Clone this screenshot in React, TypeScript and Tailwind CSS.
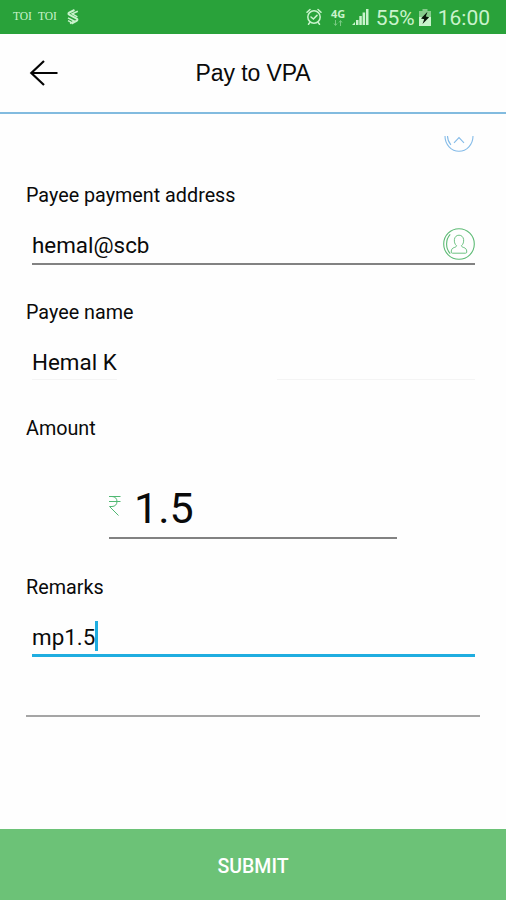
import type { ReactNode } from 'react'

export default function App() {
  return (
    <div className="flex h-[900px] w-[506px] flex-col overflow-hidden bg-[#fefefe] font-['Roboto',sans-serif] text-[#0a0a0a]">
      <StatusBar />
      <header className="grid h-20 shrink-0 grid-cols-[1fr_auto_1fr] items-center border-b-2 border-[#82bbdf] bg-[#fefefe]">
        <button aria-label="Back" className="ml-[29px] w-8">
          <BackArrow />
        </button>
        <h1 className="font-['Liberation_Sans',sans-serif] text-[23px] leading-[30px] tracking-[-0.1px]">
          Pay to VPA
        </h1>
      </header>

      <main className="mt-[22px] flex flex-1 flex-col pl-[26px]">
        <div className="h-4 pl-[417px]">
          <CloseIcon />
        </div>

        <Label className="mt-[32px]">Payee payment address</Label>
        <div className="ml-[6px] mt-[16px] flex h-[41px] w-[443px] items-center justify-between border-b-2 border-[#828282]">
          <Value className="mt-0.5">hemal@scb</Value>
          <ContactIcon />
        </div>

        <Label className="mt-[36px]">Payee name</Label>
        <div className="ml-[6px] mt-[16px] flex h-[39px] w-[443px] items-center justify-between">
          <div className="flex h-full w-[85px] items-center border-b border-[#f4f4f4]">
            <Value className="mt-1">Hemal K</Value>
          </div>
          <div className="h-full w-[198px] border-b border-[#f4f4f4]" />
        </div>

        <Label className="mt-[37px]">Amount</Label>
        <div className="ml-[83px] mt-[38px] flex h-[60px] w-[288px] items-center border-b-2 border-[#828282]">
          <RupeeIcon />
          <span className="ml-[13px] text-[43px] leading-[50px]">1.5</span>
        </div>

        <Label className="mt-[37px]">Remarks</Label>
        <div className="ml-[6px] mt-[15px] flex h-[42px] w-[443px] items-center border-b-[3px] border-[#1fade0]">
          <Value className="mt-1">mp1.5</Value>
          <span className="mt-[3px] h-[30px] w-[3px] bg-[#1fade0]" />
        </div>
        <div className="mt-[58px] h-[2px] w-[454px] bg-[#a5a5a5]" />
      </main>

      <button className="h-[71px] shrink-0 bg-[#6cc277] pt-[4px] text-[19.5px] font-medium text-white">
        SUBMIT
      </button>
    </div>
  )
}

function Label({ className, children }: { className: string; children: ReactNode }) {
  return (
    <div className={className}>
      <div className="h-6 text-[19.75px] leading-6">{children}</div>
    </div>
  )
}

function Value({ className, children }: { className: string; children: ReactNode }) {
  return (
    <div className={className}>
      <div className="whitespace-nowrap text-[22.4px] leading-7">{children}</div>
    </div>
  )
}

function StatusBar() {
  return (
    <div className="flex h-[34px] shrink-0 items-center bg-[#29a23a] pl-[13px] pr-[16px] text-[#c9f3cc]">
      <span className="font-['Liberation_Serif',serif] text-[11.5px]">TOI</span>
      <span className="ml-[6px] font-['Liberation_Serif',serif] text-[11.5px]">TOI</span>
      <BankMark />
      <div className="ml-auto flex items-center">
        <AlarmIcon />
        <div className="ml-[9px] flex w-[15px] flex-col items-center">
          <span className="font-['Open_Sans',sans-serif] text-[11px] font-bold leading-[10px]">4G</span>
          <svg width="10" height="6" viewBox="0 0 10 6" className="mt-px opacity-50">
            <path d="M2.5 0v5M1 3.5l1.5 2L4 3.5M7.5 6V1M6 2.5l1.5-2 1.5 2" fill="none" stroke="currentColor" />
          </svg>
        </div>
        <SignalIcon />
        <span className="ml-[7px] mt-px text-[21px] leading-6">55%</span>
        <BatteryIcon />
        <span className="ml-[7px] mt-px text-[21px] leading-6">16:00</span>
      </div>
    </div>
  )
}

function BankMark() {
  return (
    <svg width="12" height="16" viewBox="0 0 12 16" className="ml-[10px]" fill="none" stroke="currentColor" strokeWidth="2">
      <path d="M7.500 1 2.200 3.600c-1 .6-1 1.500 0 2.100L9.600 9.600c1.100.6 1.100 1.600 0 2.200L4.500 14.500" />
      <path d="M10.800 2.300 5.200 4.900l5.200 3M1 8.800l6.200 3.300-4.200 2.400M1 11.600l3 1.500" strokeWidth="1.500" />
    </svg>
  )
}

function AlarmIcon() {
  return (
    <svg width="16" height="18" viewBox="0 0 16 18" fill="none" stroke="currentColor" strokeWidth="1.5" strokeLinecap="round">
      <circle cx="8" cy="9" r="6.2" />
      <path d="M5 9l2.4 2L11 7.4M1 4.3 4 1.5M15 4.3l-3-2.8M3.8 14.500l-1.300 1.800M12.200 14.500l1.300 1.800" />
    </svg>
  )
}

function SignalIcon() {
  return (
    <svg width="17" height="18" viewBox="0 0 17 18" className="ml-[6px]" fill="currentColor">
      <path d="M0 17l3-3v3zM4 12h2.5v5H4zM7.3 8h2.5v9H7.3zM10.6 4.5h2.5V17h-2.5zM14 1h2.5v16H14z" />
    </svg>
  )
}

function BatteryIcon() {
  return (
    <svg width="12" height="17" viewBox="0 0 12 17" className="ml-[4px]">
      <path d="M3.5 0h5v2H12v6H0V2h3.5z" fill="#86cc8c" />
      <path d="M0 8h12v9H0z" fill="#c9f3cc" />
      <path d="M8.5 2.8 2 9.5l3.2.7L3.5 15l6.7-6.8-3.4-.8z" fill="#071509" />
    </svg>
  )
}

function BackArrow() {
  return (
    <svg width="30" height="26" viewBox="0 0 30 26" fill="none" stroke="#050505" strokeWidth="2.2">
      <path d="M28.5 13H2.5M15 1 2.3 13 15 25" />
    </svg>
  )
}

/* Only the lower half shows, the rest is scrolled out of view. */
function CloseIcon() {
  return (
    <svg width="32" height="16" viewBox="0 0 32 16" fill="none" stroke="#84bbe8" strokeWidth="1.1">
      <path d="M2 0a14 15.300 0 0 0 28 0M4.500 0c0 3.500 1.200 6.200 3.400 8.800M11 6.800l5-5.300 5 5.300" />
    </svg>
  )
}

function ContactIcon() {
  return (
    <svg width="32" height="34" viewBox="0 0 32 34" fill="none" stroke="#5cba74" strokeWidth="1.1">
      <circle cx="16" cy="17" r="15.3" />
      <path d="M7.2 7.4c-4.8 5.2-4.8 14 0 19.2" />
      <path
        d="M13.6 18.8c-2-1.7-2.4-4-2.2-6.3.3-2.5 2-4.3 4.6-4.3s4.3 1.8 4.6 4.3c.2 2.3-.2 4.6-2.2 6.3.3 1.3 2 1.5 3.5 2.2 1.5.8 2 2.6 1.8 4.2q0 1-1.2 1H9.5q-1.2 0-1.2-1c-.2-1.6.3-3.4 1.8-4.2 1.5-.7 3.2-.9 3.5-2.2z"
        strokeWidth="0.9"
      />
    </svg>
  )
}

function RupeeIcon() {
  return (
    <svg width="12" height="20" viewBox="0 0 12 20" className="mb-[5px]" fill="none" stroke="#50b872" strokeWidth="1">
      <path d="M0 .5h11.5M0 5.5h11.5M0 .5h3c3 0 5 2 5 5s-2 5-5 5H.5l9 9" />
    </svg>
  )
}
